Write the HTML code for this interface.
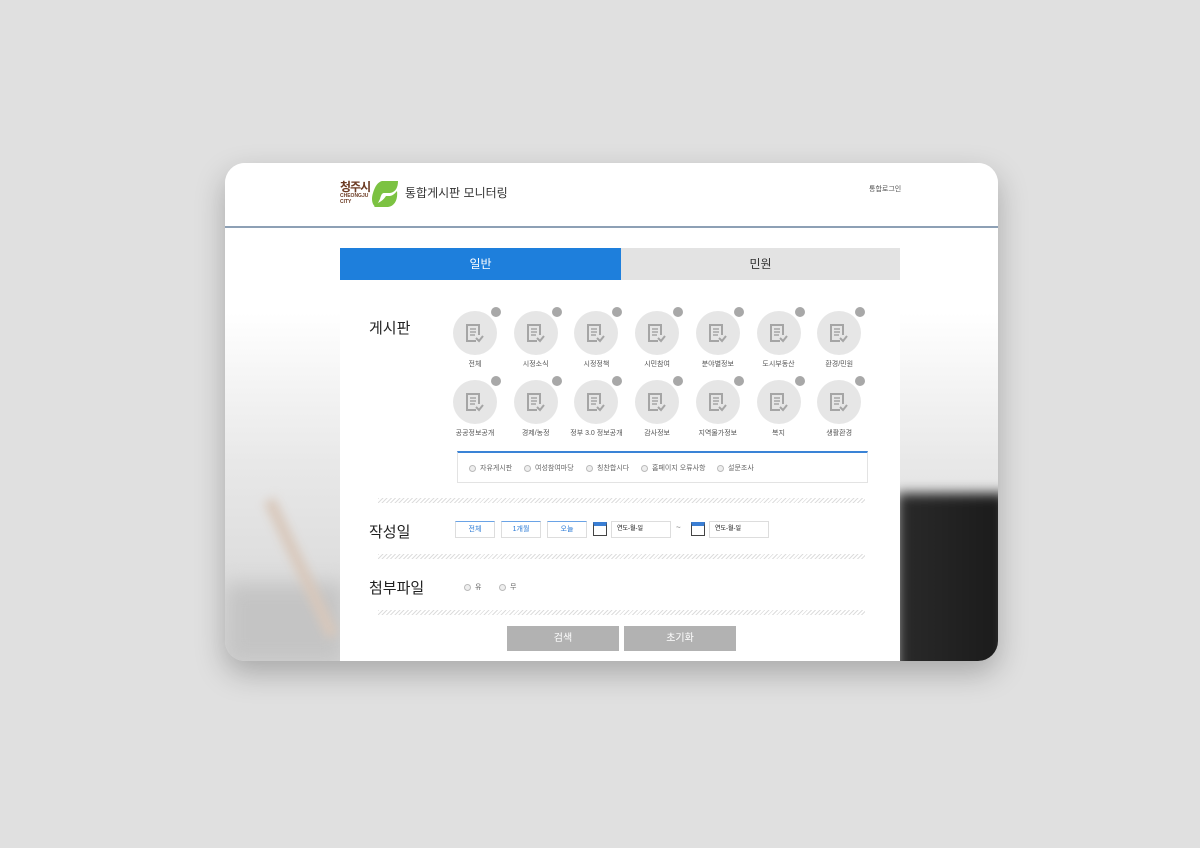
<!DOCTYPE html>
<html><head><meta charset="utf-8"><style>
*{margin:0;padding:0;box-sizing:border-box}
body{width:1200px;height:848px;background:#e0e0e0;font-family:"Liberation Sans","Noto Sans CJK KR",sans-serif;position:relative;overflow:hidden}
.card{position:absolute;left:225px;top:163px;width:773px;height:498px;border-radius:20px;overflow:hidden;box-shadow:0 12px 30px rgba(0,0,0,.25);background:linear-gradient(#fff 0,#fff 150px,#e8e8e8 300px,#d4d4d4 498px)}
.dark{position:absolute;left:672px;top:330px;width:110px;height:200px;background:linear-gradient(90deg,#2a2a2a,#1a1a1a);filter:blur(6px)}
.beige{position:absolute;left:70px;top:330px;width:12px;height:150px;background:#d8c8bb;transform:rotate(-25deg);filter:blur(5px)}
.lbot{position:absolute;left:0;top:420px;width:120px;height:80px;background:#c4c4c4;filter:blur(10px)}
.hdr{position:absolute;left:0;top:0;width:773px;height:65px;background:#fff;border-bottom:2px solid #8da0b5}
.a{position:absolute}
.panel{position:absolute;left:115px;top:85px;width:560px;height:420px;background:#fff}
.tab{position:absolute;top:0;height:32px;line-height:32px;text-align:center;font-size:12px}
.ic{position:absolute;width:44px;height:44px;border-radius:50%;background:#e6e6e6}
.ic .d{position:absolute;right:-4px;top:-4px;width:10px;height:10px;border-radius:50%;background:#a8a8a8}
.lb{position:absolute;width:80px;text-align:center;font-size:7px;color:#555}
.hat{position:absolute;left:38px;width:487px;height:5px;background:repeating-linear-gradient(135deg,#ddd 0 1px,#fff 1px 3px)}
.sec{position:absolute;left:29px;font-size:15px;color:#222}
.sb{position:absolute;top:273px;width:40px;height:17px;border:1px solid #ddd;border-top:1px solid #6aa3e6;font-size:7px;color:#2a7ad6;text-align:center;line-height:15px}
.inp{position:absolute;top:273px;width:60px;height:17px;border:1px solid #ddd;font-size:6px;padding-left:5px;line-height:15px}
.cal{position:absolute;top:274px;width:14px;height:14px;border:1.5px solid #444;border-top:4px solid #3b7fd4}
.btn{position:absolute;top:378px;width:112px;height:25px;background:#b2b2b2;color:#fff;font-size:10px;text-align:center;line-height:25px}
.r{font-size:7px;color:#666;position:absolute}
.r:before{content:"";display:inline-block;width:5px;height:5px;border-radius:50%;border:1px solid #bbb;background:#eee;margin-right:4px;vertical-align:middle}
</style></head><body>
<div class="card">
<div class="lbot"></div><div class="beige"></div><div class="dark"></div>
<div class="hdr">
 <div class="a" style="left:115px;top:15px;font-size:12px;font-weight:bold;color:#6b3a22;letter-spacing:-1px">청주시</div>
 <div class="a" style="left:115px;top:30px;font-size:5px;font-weight:bold;color:#6b3a22;line-height:6px">CHEONGJU<br>CITY</div>
 <svg class="a" style="left:145px;top:16px" width="30" height="30" viewBox="0 0 30 30"><path d="M12 2 H28 C28 8 26 13 20 14 L14 14 C12 14 11 16 10 20 L6 28 C2 26 1 20 3 14 C5 7 8 3 12 2 Z" fill="#7cc242"/><path d="M18 28 H4 L8 24 C12 22 14 20 16 17 L20 17 C24 16 25 14 27 12 C28 20 25 27 18 28 Z" fill="#7cc242"/></svg>
 <div class="a" style="left:180px;top:21px;font-size:12px;color:#333">통합게시판 모니터링</div>
 <div class="a" style="left:644px;top:21px;font-size:7px;color:#555">통합로그인</div>
</div>
<div class="panel">
 <div class="tab" style="left:0;width:281px;background:#1e7fdc;color:#fff">일반</div>
 <div class="tab" style="left:281px;width:279px;background:#e3e3e3;color:#333">민원</div>
 <div class="sec" style="top:69px">게시판</div>
 <div class="sec" style="top:273px">작성일</div>
 <div class="sec" style="top:329px">첨부파일</div>
 <div id="icons"></div>
 <div class="a" style="left:117px;top:203px;width:411px;height:32px;border:1px solid #e3e3e3;border-top:2px solid #3a83d6"></div>
 <span class="r" style="left:129px;top:215px">자유게시판</span>
 <span class="r" style="left:184px;top:215px">여성참여마당</span>
 <span class="r" style="left:246px;top:215px">칭찬합시다</span>
 <span class="r" style="left:301px;top:215px">홈페이지 오류사항</span>
 <span class="r" style="left:377px;top:215px">설문조사</span>
 <div class="hat" style="top:250px"></div>
 <div class="hat" style="top:306px"></div>
 <div class="hat" style="top:362px"></div>
 <div class="sb" style="left:115px">전체</div>
 <div class="sb" style="left:161px">1개월</div>
 <div class="sb" style="left:207px">오늘</div>
 <div class="cal" style="left:253px"></div>
 <div class="inp" style="left:271px">연도-월-일</div>
 <div class="a" style="left:336px;top:275px;font-size:8px;color:#777">~</div>
 <div class="cal" style="left:351px"></div>
 <div class="inp" style="left:369px">연도-월-일</div>
 <span class="r" style="left:124px;top:334px">유</span>
 <span class="r" style="left:159px;top:334px">무</span>
 <div class="btn" style="left:167px">검색</div>
 <div class="btn" style="left:284px">초기화</div>
</div>
</div>
<script>
var n=["전체","시정소식","시정정책","시민참여","분야별정보","도시부동산","환경/민원","공공정보공개","경제/농정","정부 3.0 정보공개","감사정보","지역물가정보","복지","생활환경"],h="";
for(var i=0;i<14;i++){var c=i%7,r=Math.floor(i/7),x=113+c*60.7,y=63+r*69;
h+='<div class="ic" style="left:'+x+'px;top:'+y+'px"><div class="d"></div><svg style="position:absolute;left:12px;top:12px" width="20" height="20" viewBox="0 0 20 20"><path d="M14 12V2H2v16h9" fill="none" stroke="#a5a5a5" stroke-width="2"/><path d="M5 6h6M5 9h6M5 12h5" stroke="#a5a5a5" stroke-width="1.6"/><path d="M11 15l3 3 4-5" fill="none" stroke="#a5a5a5" stroke-width="2"/></svg></div><div class="lb" style="left:'+(x-18)+'px;top:'+(y+48)+'px">'+n[i]+'</div>';}
document.getElementById("icons").innerHTML=h;
</script>
</body></html>
